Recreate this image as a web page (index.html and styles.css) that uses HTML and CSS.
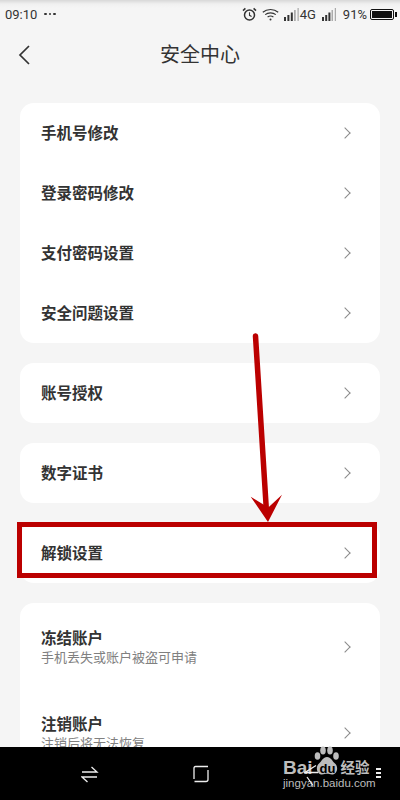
FILE: index.html
```html
<!DOCTYPE html>
<html lang="zh-CN">
<head>
  <meta charset="UTF-8" />
  <meta name="viewport" content="width=device-width, initial-scale=1.0"/>
  <title>安全中心</title>
  <link rel="stylesheet" href="styles.css">
</head>
<body>

<div class="phone">
  <div class="statusbar">
    <div class="status-left">
      <span>09:10</span>
      <span class="dots"><i></i><i></i><i></i></span>
    </div>
    <div class="status-right">
      <!-- alarm -->
      <svg class="ic-alarm" width="15" height="15" viewBox="0 0 15 15" fill="none" stroke="#333" stroke-width="1.5">
        <circle cx="7.5" cy="8" r="5"/>
        <path d="M7.5 5.2V8.3L9.6 9.4" stroke-width="1.1"/>
        <path d="M1 3.6 3.4 1.4M14 3.6 11.6 1.4"/>
      </svg>
      <!-- wifi -->
      <svg class="ic-wifi" width="17" height="13" viewBox="0 0 17 13" fill="none" stroke="#333" stroke-width="1.2">
        <path d="M.8 4.2C5 .6 12 .6 16.2 4.2"/>
        <path d="M3.2 6.6C6 4.3 11 4.3 13.8 6.6"/>
        <path d="M5.6 9C7.2 7.9 9.8 7.9 11.4 9"/>
        <circle cx="8.5" cy="11.4" r="1" fill="#333" stroke="none"/>
      </svg>
      <svg class="ic-signal" width="16" height="13" viewBox="0 0 16 13" fill="#333">
        <rect x="0" y="9" width="2" height="4"/>
        <rect x="3.4" y="7" width="2" height="6"/>
        <rect x="6.8" y="4.5" width="2" height="8.5"/>
        <rect x="10.2" y="2" width="1.4" height="11" fill="#999"/>
        <rect x="13.6" y="0" width="1" height="13" fill="#999"/>
      </svg>
      <span class="net">4G</span>
      <svg class="ic-signal2" width="15" height="13" viewBox="0 0 15 13" fill="#333">
        <rect x="0" y="9" width="2" height="4"/>
        <rect x="3.2" y="7" width="2" height="6"/>
        <rect x="6.4" y="4.5" width="2" height="8.5"/>
        <rect x="9.6" y="2" width="1.2" height="11" fill="#999"/>
        <rect x="12.8" y="0" width="1" height="13" fill="#999"/>
      </svg>
      <span class="pct">91%</span>
      <span class="battery"><i></i></span>
    </div>
  </div>

  <div class="header">
    <svg class="back" width="12" height="20" viewBox="0 0 12 20" fill="none" stroke="#333" stroke-width="1.7">
      <path d="M11 1 2 10l9 9"/>
    </svg>
    <h1>安全中心</h1>
  </div>

  <div class="content">
    <div class="card">
      <div class="row"><span class="name">手机号修改</span><span class="chev"></span></div>
      <div class="row"><span class="name">登录密码修改</span><span class="chev"></span></div>
      <div class="row"><span class="name">支付密码设置</span><span class="chev"></span></div>
      <div class="row"><span class="name">安全问题设置</span><span class="chev"></span></div>
    </div>
    <div class="card">
      <div class="row"><span class="name">账号授权</span><span class="chev"></span></div>
    </div>
    <div class="card">
      <div class="row"><span class="name">数字证书</span><span class="chev"></span></div>
    </div>
    <div class="card">
      <div class="row"><span class="name">解锁设置</span><span class="chev"></span></div>
    </div>
    <div class="card">
      <div class="row tall">
        <div class="stack"><div class="name">冻结账户</div><div class="sub">手机丢失或账户被盗可申请</div></div>
        <span class="chev"></span>
      </div>
      <div class="row tall">
        <div class="stack"><div class="name">注销账户</div><div class="sub">注销后将无法恢复</div></div>
        <span class="chev"></span>
      </div>
    </div>
  </div>

  <div class="navbar">
    <svg class="nav-switch" width="18" height="20" viewBox="0 0 18 20" fill="none" stroke="#eee" stroke-width="1.3">
      <path d="M1 8H16L10.500 3"/>
      <path d="M16 13H1L6.500 18"/>
    </svg>
    <svg class="nav-home" width="17" height="18" viewBox="0 0 17 18" fill="none" stroke="#eee" stroke-width="1.3">
      <path d="M2 14V3Q2 1.500 3.500 1.500H16M16 5V14.500Q16 16.500 14 16.500H2.500"/>
    </svg>
    <span class="nav-menu"><i></i><i></i><i></i></span>
  </div>

  <!-- annotations drawn over the screenshot -->
  <svg class="arrow" width="400" height="800" viewBox="0 0 400 800">
    <path d="M255.500 336 266.500 512" fill="none" stroke="#bb0000" stroke-width="5.500" stroke-linecap="round"/>
    <path d="M250.700 496.700 268 522 282 494.700 268.300 507.500Z" fill="#bb0000"/>
  </svg>
  <div class="redbox"></div>

  <div class="watermark">
    <div class="wm-top">
      <span class="wm-bai">Bai</span>
      <span class="wm-paw">
        <svg width="28" height="31" viewBox="0 0 28 31" fill="#bdbdbd">
          <ellipse cx="4.500" cy="10" rx="2.800" ry="3.800"/>
          <ellipse cx="10" cy="4.500" rx="2.800" ry="4"/>
          <ellipse cx="17" cy="4.500" rx="2.800" ry="4"/>
          <ellipse cx="23" cy="10" rx="2.800" ry="3.800"/>
          <path d="M14 11c4 0 5 4 8 6.500 4 3.500 2 11-3 11-2 0-3.500-.7-5-.7s-3 .7-5 .7c-5 0-7-7.500-3-11 3-2.500 4-6.500 8-6.500Z"/>
        </svg>
        <span class="wm-du">du</span>
      </span>
      <span class="wm-cn">经验</span>
    </div>
    <div class="wm-url">jingyan.baidu.com</div>
  </div>

  <!-- back key sits on top of the watermark -->
  <svg class="nav-back" width="16" height="22" viewBox="0 0 16 22" fill="none" stroke="#eee" stroke-width="1.3">
    <path d="M14 8.500H1L12 1.500M3 13l6 8.500"/>
  </svg>
</div>

</body>
</html>
```

FILE: styles.css
```css
* { box-sizing: border-box; }

html, body {
  margin: 0;
  height: 100%;
}

body {
  font-family: "Roboto", "Noto Sans CJK SC", sans-serif;
  background: #f5f5f5;
  color: #333;
}

.phone {
  position: relative;
  width: 400px;
  height: 800px;
  display: flex;
  flex-direction: column;
  overflow: hidden;
  background: linear-gradient(#d8d8d8 0, #f0f0f0 4px, #f5f5f5 8px);
}

/* Status bar */
.statusbar {
  height: 28px;
  flex: none;
  padding: 0 5px;
  display: flex;
  justify-content: space-between;
  align-items: center;
  font-size: 13px;
  color: #333;
}

.status-left {
  display: flex;
  align-items: center;
  gap: 7px;
}

.dots {
  display: flex;
  gap: 2px;
}

.dots i {
  width: 2.500px;
  height: 2.500px;
  background: #333;
  border-radius: 50%;
}

.status-right {
  display: flex;
  align-items: center;
}

.ic-alarm { margin-right: 5px; }
.ic-wifi { margin-right: 5px; }
.ic-signal { margin-right: 0; }
.net { margin-right: 6px; font-size: 13px; }
.ic-signal2 { margin-right: 6px; }
.pct { margin-right: 3px; font-size: 13px; }

.battery {
  position: relative;
  width: 24px;
  height: 11px;
  border: 1px solid #111;
  border-radius: 2px;
  padding: 1px;
  margin-right: 1px;
  display: flex;
}

.battery i {
  flex: 1;
  background: #111;
}

.battery::after {
  content: '';
  position: absolute;
  right: -3.500px;
  top: 2px;
  width: 2px;
  height: 5px;
  background: #111;
}

/* Header */
.header {
  height: 51px;
  flex: none;
  display: flex;
  align-items: center;
  justify-content: center;
  position: relative;
}

.header h1 {
  margin: 0;
  font-size: 20px;
  font-weight: 400;
  font-family: "Noto Sans CJK SC", sans-serif;
  color: #333;
}

.back {
  position: absolute;
  left: 18px;
  top: 17px;
}

/* List */
.content {
  flex: 1;
  min-height: 0;
  overflow: hidden;
  padding: 24px 20px 0;
  display: flex;
  flex-direction: column;
  gap: 20px;
}

.card {
  flex: none;
  background: #fff;
  border-radius: 14px;
}

.row {
  height: 60px;
  padding: 0 31px 2px 21px;
  display: flex;
  align-items: center;
  justify-content: space-between;
}

.row.tall {
  height: 86px;
  padding-bottom: 0;
}

.stack {
  display: flex;
  flex-direction: column;
  padding-top: 1px;
}

.name {
  font-family: "Noto Sans CJK SC", sans-serif;
  font-size: 15.500px;
  font-weight: 700;
  line-height: 20px;
  color: #333;
}

.sub {
  font-family: "Noto Sans CJK SC", sans-serif;
  font-size: 13px;
  line-height: 20px;
  color: #808080;
}

.chev {
  width: 8px;
  height: 8px;
  margin-top: 1px;
  border-top: 1.600px solid #8a8a8a;
  border-right: 1.600px solid #8a8a8a;
  transform: rotate(45deg);
}

/* Bottom nav */
.navbar {
  position: relative;
  height: 53px;
  flex: none;
  background: #000;
}

.navbar svg, .nav-menu {
  position: absolute;
}

.nav-switch { left: 81px; top: 17px; }
.nav-home { left: 192px; top: 18px; }

.nav-back {
  position: absolute;
  left: 304px;
  top: 764px;
}

.nav-menu {
  left: 376px;
  top: 21px;
  display: flex;
  flex-direction: column;
  gap: 2px;
}

.nav-menu i {
  width: 5px;
  height: 2px;
  background: #eee;
}

/* Annotations */
.arrow {
  position: absolute;
  left: 0;
  top: 0;
}

.redbox {
  position: absolute;
  left: 16.500px;
  top: 521.500px;
  width: 360px;
  height: 56px;
  border: 5.500px solid #bb0000;
}

/* Watermark */
.watermark {
  position: absolute;
  left: 283px;
  top: 746px;
  color: #bdbdbd;
}

.wm-top {
  display: flex;
  align-items: flex-end;
  height: 31px;
}

.wm-bai {
  font-family: "Liberation Sans", sans-serif;
  font-size: 19px;
  font-weight: 700;
  line-height: 21px;
  margin-bottom: -1px;
}

.wm-paw {
  position: relative;
  display: block;
  width: 28px;
  height: 31px;
}

.wm-du {
  position: absolute;
  left: 7px;
  top: 15px;
  color: #000;
  font-family: "Liberation Sans", sans-serif;
  font-size: 13px;
  font-weight: 700;
}

.wm-cn {
  font-family: "Noto Sans CJK SC", sans-serif;
  font-size: 14.500px;
  font-weight: 700;
  line-height: 21px;
}

.wm-url {
  font-family: "Liberation Sans", sans-serif;
  font-size: 11.500px;
  line-height: 12px;
}
```
